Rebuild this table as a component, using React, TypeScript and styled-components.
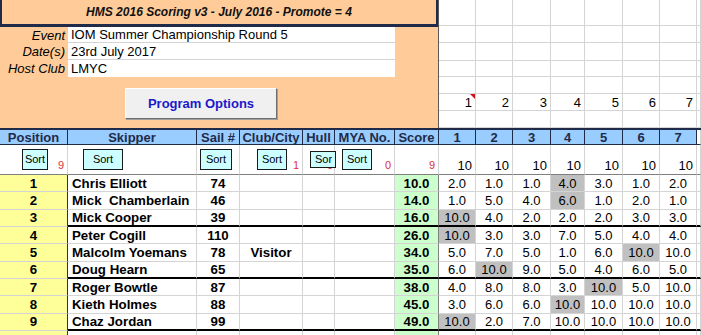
import styled, { createGlobalStyle } from "styled-components";

const GRID = "#d4d4d4";
const NAVY = "#1f2b48";
const COLS =
  "68px 129px 43px 63px 32px 60px 44px 37px 37px 38px 34px 38px 37px 37px 4px";

const GlobalStyle = createGlobalStyle`
  html, body {
    margin: 0;
    padding: 0;
    background: #fff;
  }
  body {
    font-family: "Liberation Sans", Arial, sans-serif;
  }
`;

const Sheet = styled.div`
  width: 701px;
  height: 335px;
  overflow: hidden;
  background: #fff;
  color: #000;
`;

const Top = styled.div`
  display: flex;
  height: 128px;
`;

const Banner = styled.div`
  width: 439px;
  flex: none;
  box-sizing: border-box;
  background: #ffcc99;
  border-right: 1px solid #5a5a5a;
  display: flex;
  flex-direction: column;
`;

const Title = styled.div`
  height: 27px;
  box-sizing: border-box;
  border-left: 2px solid ${NAVY};
  border-right: 2px solid ${NAVY};
  border-bottom: 3px solid ${NAVY};
  display: flex;
  align-items: center;
  justify-content: center;
  font-size: 12px;
  font-weight: bold;
  font-style: italic;
  color: #111;
`;

const Fields = styled.div`
  display: grid;
  grid-template-columns: 68px 327px;
  grid-template-rows: 16px 17px 17px;
`;

const FieldLabel = styled.div`
  display: flex;
  align-items: center;
  justify-content: flex-end;
  padding-right: 3px;
  font-size: 13px;
  font-style: italic;
`;

const FieldValue = styled.div<{ $last?: boolean }>`
  display: flex;
  align-items: center;
  box-sizing: border-box;
  padding-left: 3px;
  background: #fff;
  border-bottom: ${(p) => (p.$last ? "none" : `1px solid ${GRID}`)};
  font-size: 13px;
`;

const ButtonBar = styled.div`
  padding: 11px 0 0 125px;
`;

const OptionsButton = styled.button`
  width: 152px;
  height: 31px;
  box-sizing: border-box;
  padding: 0;
  background: #f0f0f0;
  border: 1px solid;
  border-color: #ffffff #6e6e6e #6e6e6e #ffffff;
  box-shadow: 1px 1px 0 #a0a0a0;
  font-family: inherit;
  font-size: 13px;
  font-weight: bold;
  color: #1a1acc;
`;

const SideGrid = styled.div`
  display: grid;
  grid-template-columns: 37px 37px 38px 34px 38px 37px 37px 3px;
  grid-template-rows: 26px 17px 18px 16px 17px 17px 17px;
`;

const SideCell = styled.div`
  position: relative;
  box-sizing: border-box;
  border-right: 1px solid ${GRID};
  border-bottom: 1px solid ${GRID};
  display: flex;
  align-items: center;
  justify-content: flex-end;
  padding-right: 3px;
  font-size: 13px;
`;

const CommentMark = styled.span`
  position: absolute;
  top: 0;
  right: 0;
  width: 0;
  height: 0;
  border-top: 5px solid #d01020;
  border-left: 5px solid transparent;
`;

const Row = styled.div<{ $h: number; $top?: boolean }>`
  display: grid;
  grid-template-columns: ${COLS};
  height: ${(p) => p.$h}px;
  box-sizing: border-box;
  border-top: ${(p) => (p.$top ? `2px solid ${NAVY}` : "none")};
`;

const HeadCell = styled.div<{ $blank?: boolean }>`
  box-sizing: border-box;
  display: flex;
  align-items: center;
  justify-content: center;
  background: ${(p) => (p.$blank ? "#fff" : "#99ccff")};
  border-right: 1px solid ${(p) => (p.$blank ? GRID : NAVY)};
  border-bottom: 1px solid ${NAVY};
  font-size: 13px;
  font-weight: bold;
  color: ${NAVY};
  white-space: nowrap;
  overflow: hidden;
`;

const SortCell = styled.div`
  display: grid;
  grid-template: 1fr / 1fr;
  box-sizing: border-box;
  min-width: 0;
  border-right: 1px solid ${GRID};
  border-bottom: 1px solid #7f7f7f;
`;

const SortButton = styled.div<{ $left: number; $width: number; $short?: boolean }>`
  grid-area: 1 / 1;
  justify-self: start;
  align-self: start;
  z-index: 1;
  margin-left: ${(p) => p.$left}px;
  margin-top: ${(p) => (p.$short ? 6 : 4)}px;
  width: ${(p) => p.$width}px;
  height: ${(p) => (p.$short ? 17 : 21)}px;
  box-sizing: border-box;
  padding: ${(p) => (p.$short ? "1px 2px 0 3px" : "3px 0 0")};
  border: 1px solid #1a1a1a;
  background: #ccffff;
  font-size: 11px;
  line-height: 13px;
  text-align: center;
  word-break: break-all;
  overflow: hidden;
`;

const RedCount = styled.span`
  grid-area: 1 / 1;
  justify-self: end;
  align-self: end;
  padding: 0 3px 2px 0;
  font-size: 11px;
  line-height: 13px;
  color: #e0303a;
`;

const RaceCount = styled.span`
  grid-area: 1 / 1;
  justify-self: end;
  align-self: end;
  padding: 0 3px 1px 0;
  font-size: 13px;
  line-height: 15px;
`;

const Cell = styled.div<{
  $end?: boolean;
  $align?: "left" | "center";
  $bold?: boolean;
  $bg?: string;
  $edge?: string;
}>`
  box-sizing: border-box;
  display: flex;
  align-items: center;
  justify-content: ${(p) => (p.$align === "left" ? "flex-start" : "center")};
  padding: 0 ${(p) => (p.$align === "left" ? "0 0 4px" : "0")};
  background: ${(p) => p.$bg || "#fff"};
  border-right: 1px solid ${(p) => p.$edge || GRID};
  border-bottom: ${(p) => (p.$end ? "2px solid #000" : `1px solid ${GRID}`)};
  font-size: ${(p) => (p.$bold ? "13.3px" : "13px")};
  font-weight: ${(p) => (p.$bold ? "bold" : "normal")};
  white-space: pre;
  overflow: hidden;
`;

const PosCell = styled(Cell)`
  background: #ffff99;
  border-right: 1px solid #333;
  border-bottom: 1px solid ${GRID};
`;

interface IResult {
  name: string;
  sail: string;
  club?: string;
  score: string;
  races: number[];
  dropped: number;
}

const results: IResult[] = [
  { name: "Chris Elliott", sail: "74", score: "10.0", races: [2, 1, 1, 4, 3, 1, 2], dropped: 3 },
  { name: "Mick  Chamberlain", sail: "46", score: "14.0", races: [1, 5, 4, 6, 1, 2, 1], dropped: 3 },
  { name: "Mick Cooper", sail: "39", score: "16.0", races: [10, 4, 2, 2, 2, 3, 3], dropped: 0 },
  { name: "Peter Cogill", sail: "110", score: "26.0", races: [10, 3, 3, 7, 5, 4, 4], dropped: 0 },
  { name: "Malcolm Yoemans", sail: "78", club: "Visitor", score: "34.0", races: [5, 7, 5, 1, 6, 10, 10], dropped: 5 },
  { name: "Doug Hearn", sail: "65", score: "35.0", races: [6, 10, 9, 5, 4, 6, 5], dropped: 1 },
  { name: "Roger Bowtle", sail: "87", score: "38.0", races: [4, 8, 8, 3, 10, 5, 10], dropped: 4 },
  { name: "Kieth Holmes", sail: "88", score: "45.0", races: [3, 6, 6, 10, 10, 10, 10], dropped: 3 },
  { name: "Chaz Jordan", sail: "99", score: "49.0", races: [10, 2, 7, 10, 10, 10, 10], dropped: 0 },
];

const headers = ["Position", "Skipper", "Sail #", "Club/City", "Hull", "MYA No.", "Score", "1", "2", "3", "4", "5", "6", "7"];
const races = [1, 2, 3, 4, 5, 6, 7];
const sideRows = [0, 1, 2, 3, 4, 5, 6];
const sideCols = [0, 1, 2, 3, 4, 5, 6, 7];

function App() {
  return (
    <Sheet>
      <GlobalStyle />
      <Top>
        <Banner>
          <Title>HMS 2016 Scoring v3 - July 2016 - Promote = 4</Title>
          <Fields>
            <FieldLabel>Event</FieldLabel>
            <FieldValue>IOM Summer Championship Round 5</FieldValue>
            <FieldLabel>Date(s)</FieldLabel>
            <FieldValue>23rd July 2017</FieldValue>
            <FieldLabel>Host Club</FieldLabel>
            <FieldValue $last>LMYC</FieldValue>
          </Fields>
          <ButtonBar>
            <OptionsButton>Program Options</OptionsButton>
          </ButtonBar>
        </Banner>
        <SideGrid>
          {sideRows.map((r) =>
            sideCols.map((c) => (
              <SideCell key={`${r}-${c}`}>
                {r === 5 && c < 7 ? c + 1 : null}
                {r === 5 && c === 0 && <CommentMark />}
              </SideCell>
            ))
          )}
        </SideGrid>
      </Top>

      <Row $h={17} $top>
        {headers.map((h) => (
          <HeadCell key={h}>{h}</HeadCell>
        ))}
        <HeadCell $blank />
      </Row>

      <Row $h={30}>
        <SortCell>
          <SortButton $left={22} $width={26}>Sort</SortButton>
          <RedCount>9</RedCount>
        </SortCell>
        <SortCell>
          <SortButton $left={15} $width={40}>Sort</SortButton>
        </SortCell>
        <SortCell>
          <SortButton $left={3} $width={32}>Sort</SortButton>
        </SortCell>
        <SortCell>
          <SortButton $left={17} $width={30}>Sort</SortButton>
          <RedCount>1</RedCount>
        </SortCell>
        <SortCell>
          <RedCount>0</RedCount>
          <SortButton $left={7} $width={26} $short>Sort</SortButton>
        </SortCell>
        <SortCell>
          <SortButton $left={7} $width={30}>Sort</SortButton>
          <RedCount>0</RedCount>
        </SortCell>
        <SortCell>
          <RedCount>9</RedCount>
        </SortCell>
        {races.map((r) => (
          <SortCell key={r}>
            <RaceCount>10</RaceCount>
          </SortCell>
        ))}
        <SortCell />
      </Row>

      {results.map((res, i) => {
        const end = i % 3 === 2;
        return (
          <Row $h={17.33} key={res.name}>
            <PosCell $bold>{i + 1}</PosCell>
            <Cell $end={end} $bold $align="left">{res.name}</Cell>
            <Cell $end={end} $bold>{res.sail}</Cell>
            <Cell $end={end} $bold>{res.club}</Cell>
            <Cell $end={end} />
            <Cell $end={end} />
            <Cell $end={end} $bold $bg="#ccffcc" $edge="#808080">{res.score}</Cell>
            {res.races.map((v, j) => (
              <Cell key={j} $end={end} $bg={j === res.dropped ? "#c0c0c0" : undefined}>
                {v.toFixed(1)}
              </Cell>
            ))}
            <Cell $end={end} />
          </Row>
        );
      })}

      <Row $h={12}>
        <PosCell />
        <Cell />
        <Cell />
        <Cell />
        <Cell />
        <Cell />
        <Cell $bg="#ccffcc" $edge="#808080" />
        {races.map((r) => (
          <Cell key={r} />
        ))}
        <Cell />
      </Row>
    </Sheet>
  );
}

export default App;
